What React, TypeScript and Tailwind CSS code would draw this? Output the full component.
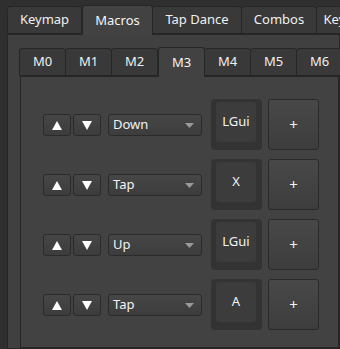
import React from "react";

const FONT = { fontFamily: '"Noto Sans", "Liberation Sans", sans-serif' };

type Row = { action: string; key: string };

const rows: Row[] = [
  { action: "Down", key: "LGui" },
  { action: "Tap", key: "X" },
  { action: "Up", key: "LGui" },
  { action: "Tap", key: "A" },
];

function Triangle({ up }: { up?: boolean }) {
  return (
    <svg width="10" height="9" viewBox="0 0 10 9">
      {up ? <polygon points="5,0 10,9 0,9" fill="#ffffff" /> : <polygon points="0,0 10,0 5,9" fill="#ffffff" />}
    </svg>
  );
}

function MacroRow({ row }: { row: Row }) {
  return (
    <div className="flex items-center h-[60px]">
      <button className="w-[28px] h-[22px] flex items-center justify-center rounded-[3px] border border-[#2a2a2a] bg-gradient-to-b from-[#464646] to-[#3c3c3c]">
        <Triangle up />
      </button>
      <button className="ml-[2px] w-[28px] h-[22px] flex items-center justify-center rounded-[3px] border border-[#2a2a2a] bg-gradient-to-b from-[#464646] to-[#3c3c3c]">
        <Triangle />
      </button>
      <div className="ml-[7px] w-[94px] h-[22px] flex items-center justify-between pl-[4px] pr-[7px] rounded-[3px] border border-[#2a2a2a] bg-gradient-to-b from-[#464646] to-[#3c3c3c] text-[13px] text-[#f2f2f2]">
        <span>{row.action}</span>
        <svg width="9" height="5" viewBox="0 0 9 5">
          <polygon points="0,0 9,0 4.5,5" fill="#9a9a9a" />
        </svg>
      </div>
      <div className="ml-[9px] w-[51px] h-[51px] rounded-[4px] bg-[#333333] pt-[3px] pl-[5px] -mt-px">
        <div className="w-[40px] h-[40px] rounded-[3px] bg-[#3c3c3c] flex items-center justify-center text-[13px] text-[#f2f2f2]">
          {row.key}
        </div>
      </div>
      <button className="ml-[6px] w-[51px] h-[51px] -mt-[2px] rounded-[3px] border border-[#2a2a2a] bg-gradient-to-b from-[#484848] to-[#3d3d3d] flex items-center justify-center text-[15px] text-[#f2f2f2]">
        +
      </button>
    </div>
  );
}

export default function App() {
  const topTabs = [
    { label: "Keymap", w: "w-[75px]" },
    { label: "Macros", w: "w-[71px]", active: true },
    { label: "Tap Dance", w: "w-[90px]" },
    { label: "Combos", w: "w-[76px]" },
    { label: "Key Overrides", w: "w-[100px]" },
  ];
  const macroTabs = ["M0", "M1", "M2", "M3", "M4", "M5", "M6", "M7"];

  return (
    <div className="w-[340px] h-[349px] overflow-hidden bg-[#2f2f2f] pl-[7px] pt-[4px] flex flex-col" style={FONT}>
      <div className="flex items-end h-[30px] shrink-0">
        {topTabs.map((t) =>
          t.active ? (
            <div
              key={t.label}
              className={`${t.w} shrink-0 h-[30px] -mb-px relative z-10 rounded-t-[3px] border border-b-0 border-[#262626] bg-[#424242] flex items-center justify-center text-[13px] text-[#f4f4f4]`}
            >
              {t.label}
            </div>
          ) : (
            <div
              key={t.label}
              className={`${t.w} shrink-0 h-[28px] rounded-t-[3px] border border-[#262626] bg-[#393939] flex items-center justify-center text-[13px] text-[#f0f0f0] -ml-px first:ml-0 whitespace-nowrap overflow-hidden`}
            >
              {t.label}
            </div>
          )
        )}
      </div>
      <div className="flex-1 border border-[#262626] bg-[#404040] pl-[12px] pt-[11px] flex flex-col">
        <div className="flex items-end h-[30px] shrink-0">
          {macroTabs.map((m) =>
            m === "M3" ? (
              <div
                key={m}
                className="w-[47px] shrink-0 h-[30px] -mb-px relative z-10 rounded-t-[3px] border border-b-0 border-[#262626] bg-[#424242] flex items-center justify-center text-[13px] text-[#f4f4f4]"
              >
                {m}
              </div>
            ) : (
              <div
                key={m}
                className="w-[47px] shrink-0 h-[28px] rounded-t-[3px] border border-[#262626] bg-[#393939] flex items-center justify-center text-[13px] text-[#f0f0f0] -ml-px"
              >
                {m}
              </div>
            )
          )}
        </div>
        <div className="flex-1 border border-[#262626] bg-[#424242] pl-[22px] pt-[18px] flex flex-col">
          {rows.map((r, i) => (
            <MacroRow key={i} row={r} />
          ))}
        </div>
      </div>
    </div>
  );
}
